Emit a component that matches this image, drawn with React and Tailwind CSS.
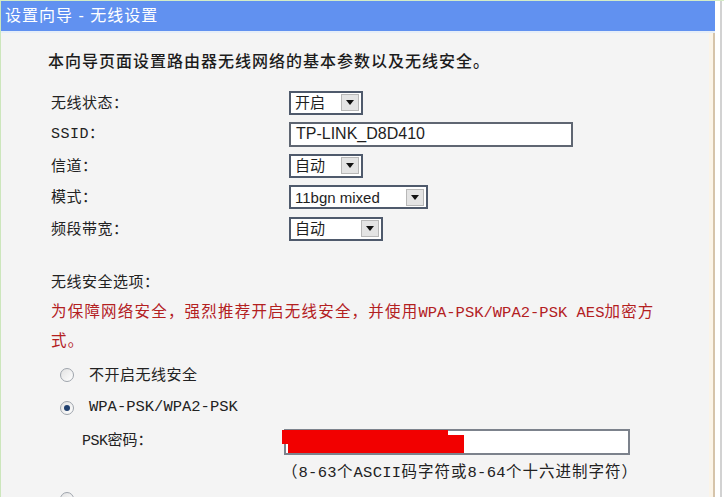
import React from 'react';

const cjk = { fontFamily: "'Liberation Sans','Noto Sans CJK SC',sans-serif" };
const mono = { fontFamily: "'Liberation Mono','Noto Sans CJK SC',monospace" };

const Arrow = () => (
  <div className="h-[17px] w-[18px] bg-[#e4e4e4] border border-[#b8b8b8] flex items-center justify-center">
    <svg width="8" height="5" viewBox="0 0 8 5">
      <path d="M0 0 L8 0 L4 5 Z" fill="#111" />
    </svg>
  </div>
);

// dropdown as drawn by the old router page
const Select = ({ label, width }) => (
  <div
    className={`h-[24px] ${width} border-2 border-[#4f5a6c] bg-white flex items-center justify-between pl-[4px] pr-[2px]`}
  >
    <span className="text-[15px] text-[#1e1e1e] leading-none">{label}</span>
    <Arrow />
  </div>
);

const Radio = ({ checked }) => (
  <div className="w-[14px] h-[14px] rounded-full border border-[#9ea4ac] bg-gradient-to-br from-[#e2e2e2] to-white flex items-center justify-center">
    {checked && <div className="w-[6px] h-[6px] rounded-full bg-[#1f3f6e]" />}
  </div>
);

const rows = [
  { label: '无线状态：', control: <Select label="开启" width="w-[74px]" /> },
  {
    label: <span style={mono}>SSID：</span>,
    control: (
      <div className="h-[25px] w-[284px] border-2 border-[#5f6672] bg-white flex items-center pl-[5px]">
        <span className="text-[16px] text-[#1e1e1e]">TP-LINK_D8D410</span>
      </div>
    ),
  },
  { label: '信道：', control: <Select label="自动" width="w-[74px]" /> },
  { label: '模式：', control: <Select label="11bgn mixed" width="w-[139px]" /> },
  { label: '频段带宽：', control: <Select label="自动" width="w-[94px]" /> },
];

export default function App() {
  return (
    <div className="w-[724px] h-[497px] overflow-hidden bg-white flex flex-col" style={cjk}>
      <div className="h-[1px] bg-[#d4ecc6]" />
      <div className="flex flex-1 min-h-0">
        <div className="w-[1px] bg-[#cce6bc]" />
        <div className="w-[714px] flex flex-col">
          {/* Header */}
          <div className="h-[30px] bg-[#6191f0] flex items-center pl-[4px]">
            <span className="text-white text-[16px] tracking-[1px]">设置向导 - 无线设置</span>
          </div>
          <div className="h-[2px] bg-[#e6eef8]" />

          <div className="flex flex-1 min-h-0">
            <div className="flex-1 bg-[#f4f4f4] text-[#222] pl-[47px]">
              <p className="mt-[17px] h-[24px] leading-[24px] text-[16px] tracking-[1px] text-[#1c1c1c] font-medium">
                本向导页面设置路由器无线网络的基本参数以及无线安全。
              </p>

              {/* Basic settings */}
              <div className="mt-[13px] pl-[3px] flex flex-col">
                {rows.map((r, i) => (
                  <div key={i} className="h-[31.5px] flex items-center">
                    <div className="w-[238px] text-[15px] tracking-[0.5px]">{r.label}</div>
                    {r.control}
                  </div>
                ))}
              </div>

              {/* Security */}
              <div className="pl-[3px]">
                <p className="mt-[25px] h-[24px] leading-[24px] text-[15px] tracking-[0.5px]">无线安全选项：</p>
                <p className="mt-[4px] leading-[28px] text-[15.5px] tracking-[1.2px] text-[#b3201f] whitespace-nowrap">
                  为保障网络安全，强烈推荐开启无线安全，并使用
                  <span style={mono} className="text-[15.5px] tracking-[0px]">WPA-PSK/WPA2-PSK AES</span>
                  加密方
                  <br />
                  式。
                </p>

                <div className="mt-[4px] h-[33px] flex items-center pl-[9px]">
                  <Radio />
                  <span className="ml-[15px] text-[15px] tracking-[0.5px]">不开启无线安全</span>
                </div>
                <div className="h-[33px] flex items-center pl-[9px]">
                  <Radio checked />
                  <span className="ml-[15px] text-[15.5px] tracking-[0px]" style={mono}>
                    WPA-PSK/WPA2-PSK
                  </span>
                </div>

                <div className="mt-[3px] h-[28px] flex items-center pl-[31px]">
                  <span className="w-[202px] text-[15px]">
                    <span style={mono} className="tracking-[-0.5px]">PSK</span>密码：
                  </span>
                  <div className="relative h-[26px] w-[346px] border-2 border-[#7c828c] bg-white">
                    <svg
                      className="absolute left-[-4px] top-[-1px] overflow-visible"
                      width="190"
                      height="24"
                      viewBox="0 0 190 24"
                    >
                      <polygon points="0,0 166,0 166,5 182,5 182,23 6,23 6,14 0,14" fill="#f20000" />
                    </svg>
                  </div>
                </div>

                <p className="mt-[4px] h-[24px] leading-[24px] pl-[231px] text-[15.5px] tracking-[1px] whitespace-nowrap">
                  （<span style={mono} className="tracking-[0.3px]">8-63</span>个
                  <span style={mono} className="tracking-[0.3px]">ASCII</span>码字符或
                  <span style={mono} className="tracking-[0.3px]">8-64</span>个十六进制字符）
                </p>

                <div className="mt-[8px] pl-[9px]">
                  <Radio />
                </div>
              </div>
            </div>
            {/* right frame edge */}
            <div className="w-[4px] bg-[#fbf4e8]" />
            <div className="w-[2px] bg-[#d6c4aa]" />
          </div>
        </div>
        <div className="w-[5px] bg-white" />
        <div className="w-[2px] bg-[#d2d2d2]" />
        <div className="flex-1 bg-white" />
      </div>
    </div>
  );
}
